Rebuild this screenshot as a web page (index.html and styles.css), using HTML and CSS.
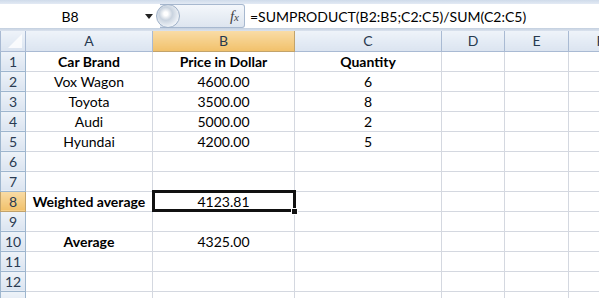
FILE: index.html
```html
<!DOCTYPE html>
<html lang="en">
	<head>
		<meta charset="utf-8">
		<title>Weighted average</title>
		<link rel="stylesheet" href="styles.css">
	</head>
	<body>

		<!--
			formula bar: name box, fx button and the formula text
		-->

		<div class="ribbon-edge"></div>
		<div class="formula-bar">
			<div class="name-box">
				<span class="cell-name">B8</span>
				<span class="drop-arrow"></span>
			</div>
			<div class="fx-button">
				<span class="knob"></span>
				<span class="fx"><i>f</i><i class="x">x</i></span>
			</div>
			<div class="formula">=SUMPRODUCT(B2:B5;C2:C5)/SUM(C2:C5)</div>
		</div>
		<div class="bar-rule"></div>

		<!--
			the sheet itself
		-->

		<table class="sheet">
			<colgroup>
				<col class="c-row">
				<col class="c-a">
				<col class="c-b">
				<col class="c-c">
				<col class="c-d">
				<col class="c-e">
				<col class="c-f">
			</colgroup>
			<tr class="head">
				<th class="corner"><span class="tri"></span></th>
				<th>A</th>
				<th class="active">B</th>
				<th>C</th>
				<th>D</th>
				<th>E</th>
				<th>F</th>
			</tr>
			<tr>
				<th class="num">1</th>
				<td class="bold">Car Brand</td>
				<td class="bold">Price in Dollar</td>
				<td class="bold">Quantity</td>
				<td></td><td></td><td></td>
			</tr>
			<tr>
				<th class="num">2</th>
				<td>Vox Wagon</td>
				<td>4600.00</td>
				<td>6</td>
				<td></td><td></td><td></td>
			</tr>
			<tr>
				<th class="num">3</th>
				<td>Toyota</td>
				<td>3500.00</td>
				<td>8</td>
				<td></td><td></td><td></td>
			</tr>
			<tr>
				<th class="num">4</th>
				<td>Audi</td>
				<td>5000.00</td>
				<td>2</td>
				<td></td><td></td><td></td>
			</tr>
			<tr>
				<th class="num">5</th>
				<td>Hyundai</td>
				<td>4200.00</td>
				<td>5</td>
				<td></td><td></td><td></td>
			</tr>
			<tr>
				<th class="num">6</th>
				<td></td><td></td><td></td><td></td><td></td><td></td>
			</tr>
			<tr>
				<th class="num">7</th>
				<td></td><td></td><td></td><td></td><td></td><td></td>
			</tr>
			<tr>
				<th class="num active">8</th>
				<td class="bold">Weighted average</td>
				<td class="selected">4123.81<span class="handle"></span></td>
				<td></td><td></td><td></td><td></td>
			</tr>
			<tr>
				<th class="num">9</th>
				<td></td><td></td><td></td><td></td><td></td><td></td>
			</tr>
			<tr>
				<th class="num">10</th>
				<td class="bold">Average</td>
				<td>4325.00</td>
				<td></td><td></td><td></td><td></td>
			</tr>
			<tr>
				<th class="num">11</th>
				<td></td><td></td><td></td><td></td><td></td><td></td>
			</tr>
			<tr>
				<th class="num">12</th>
				<td></td><td></td><td></td><td></td><td></td><td></td>
			</tr>
			<tr>
				<th class="num"></th>
				<td></td><td></td><td></td><td></td><td></td><td></td>
			</tr>
		</table>

	</body>
</html>
```

FILE: styles.css
```css
/*
	page basics
*/

body {
	margin: 0;
	width: 599px;
	height: 298px;
	overflow: hidden;
	background: #ffffff;
	font-family: Lato, "Open Sans", sans-serif;
	font-size: 14px;
	color: #000000;
}

/*
	strip left from the ribbon above the formula bar
*/

.ribbon-edge {
	height: 4px;
	background: linear-gradient(#cfdbea, #e3eaf4);
}

/*
	formula bar
*/

.formula-bar {
	display: flex;
	height: 24px;
	background: #ffffff;
	align-items: center;
}

.name-box {
	width: 152px;
	display: flex;
	align-items: center;
	position: relative;
	height: 100%;
}

.cell-name {
	width: 140px;
	text-align: center;
	font-size: 14px;
}

.drop-arrow {
	position: absolute;
	left: 145px;
	top: 10px;
	border-left: 4px solid transparent;
	border-right: 4px solid transparent;
	border-top: 5px solid #222222;
}

.fx-button {
	width: 84px;
	margin-left: 8px;
	height: 22px;
	border: 1px solid #a7b8cf;
	border-left: none;
	border-radius: 0 3px 3px 0;
	background: linear-gradient(#f4f7fb, #dde5ef);
	position: relative;
	display: flex;
	align-items: center;
	justify-content: flex-end;
}

.knob {
	position: absolute;
	left: -4px;
	top: -1px;
	width: 22px;
	height: 22px;
	border-radius: 50%;
	border: 1px solid #9fb1c8;
	background: radial-gradient(circle at 40% 40%, #ffffff 10%, #c9d3df 35%, #eef2f7 70%);
}

.fx {
	font-family: "Liberation Serif", serif;
	font-size: 15px;
	color: #444444;
	padding-right: 5px;
}

.fx .x {
	font-size: 11px;
}

.formula {
	padding-left: 5px;
	font-size: 14px;
	white-space: nowrap;
}

.bar-rule {
	height: 3px;
	background: linear-gradient(#c3cfdf, #dbe3ee);
}

/*
	the grid
*/

.sheet {
	border-collapse: collapse;
	table-layout: fixed;
	width: 632px;
}

.c-row { width: 25px; }
.c-a { width: 127px; }
.c-b { width: 142px; }
.c-c { width: 147px; }
.c-d { width: 63px; }
.c-e { width: 64px; }
.c-f { width: 64px; }

.sheet tr {
	height: 20px;
}

.sheet td {
	border: 1px solid #d4d8e0;
	text-align: center;
	padding: 0;
	height: 19px;
	line-height: 19px;
	white-space: nowrap;
}

.sheet th {
	font-weight: normal;
	padding: 0;
	border: 1px solid #a9bad3;
	background: linear-gradient(#eef3f9, #dbe4f0);
	color: #27394f;
	height: 19px;
	line-height: 19px;
	overflow: hidden;
}

.sheet .head th {
	border-color: #a9bad3;
	border-top: none;
}

.sheet th.num {
	color: #2a3b52;
	text-align: center;
	border-color: #9eb6ce;
}

.sheet th.active {
	background: linear-gradient(#f9dca6, #f1c16b);
	border-color: #c2a36b;
}

.corner {
	position: relative;
}

.tri {
	position: absolute;
	right: 3px;
	bottom: 3px;
	border-left: 14px solid transparent;
	border-bottom: 14px solid #ffffff;
	opacity: 0.8;
}

.bold {
	font-weight: bold;
}

/*
	active cell: thick border with the fill handle
*/

.sheet td.selected {
	position: relative;
	outline: 3px solid #111111;
	outline-offset: -2px;
}

.handle {
	position: absolute;
	right: -4px;
	bottom: -4px;
	width: 5px;
	height: 5px;
	background: #111111;
	border: 1px solid #ffffff;
}
```
